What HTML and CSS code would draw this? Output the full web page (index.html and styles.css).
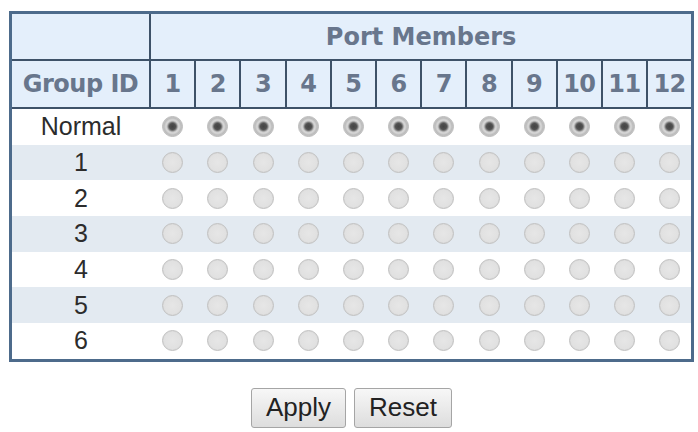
FILE: index.html
```html
<!DOCTYPE html>
<html>
    <head>
        <title>Port Isolation</title>
        <meta charset="UTF-8">
        <meta name="viewport" content="width=device-width, initial-scale=1.0">
        <link rel="stylesheet" href="styles.css">
    </head>
    <body>
        <form id="isolationForm" class="panel">
            <table class="members">
                <colgroup>
                    <col class="col-group">
                    <col span="12" class="col-port">
                </colgroup>
                <thead>
                    <tr class="title-row">
                        <th></th>
                        <th colspan="12">Port Members</th>
                    </tr>
                    <tr class="port-row" id="portRow">
                        <th>Group ID</th>
                    </tr>
                </thead>
                <tbody id="groupList"></tbody>
            </table>

            <div class="actions">
                <button type="button" class="button">Apply</button>
                <button type="reset" class="button">Reset</button>
            </div>
        </form>

        <script>
            const ports = 12;
            const groups = ['Normal', '1', '2', '3', '4', '5', '6'];

            const portRow = document.getElementById('portRow');
            for (let p = 1; p <= ports; p++) {
                const th = document.createElement('th');
                th.textContent = p;
                portRow.appendChild(th);
            }

            const groupList = document.getElementById('groupList');
            groups.forEach((group, i) => {
                const row = document.createElement('tr');
                const label = document.createElement('td');
                label.className = 'group-name';
                label.textContent = group;
                row.appendChild(label);

                for (let p = 1; p <= ports; p++) {
                    const cell = document.createElement('td');
                    const radio = document.createElement('input');
                    radio.type = 'radio';
                    radio.name = 'port' + p;
                    radio.value = i;
                    radio.className = 'radio';
                    if (i === 0) radio.defaultChecked = true;
                    cell.appendChild(radio);
                    row.appendChild(cell);
                }
                groupList.appendChild(row);
            });
        </script>
    </body>
</html>
```

FILE: styles.css
```css
body {
    margin: 0;
    padding: 0;
    background-color: #fff;
    font-family: "Liberation Sans", Arial, sans-serif;
}
.panel {
    padding: 11px 0 0 9px;
}
.members {
    width: 685px;
    table-layout: fixed;
    border-collapse: collapse;
    border: 3px solid #4d6b8b;
}
.col-group {
    width: 139px;
}
.col-port {
    width: 45px;
}
thead th {
    background-color: #e4effb;
    color: #68768c;
    font-family: "DejaVu Sans", Verdana, sans-serif;
    font-weight: bold;
    font-size: 24px;
    border: 2px solid #3e5268;
    padding: 0;
}
.port-row th {
    height: 46px;
    letter-spacing: -0.5px;
}
.title-row th {
    height: 45px;
}
tbody td {
    height: 35.7px;
    padding: 0;
    text-align: center;
    vertical-align: middle;
}
tbody tr:nth-child(even) td {
    background-color: #e3eaf1;
}
.group-name {
    font-size: 25px;
    color: #2c2c2c;
}
.radio {
    appearance: none;
    -webkit-appearance: none;
    display: block;
    width: 21px;
    height: 21px;
    margin: 0 auto;
    border-radius: 50%;
    border: 1px solid #c2c2c2;
    background: radial-gradient(circle, #e6e6e6 0, #e1e1e1 60%, #cfcfcf 85%, #c6c6c6 100%);
}
.radio:checked {
    border-color: #bdbdbd;
    background: radial-gradient(circle, #444 0, #505050 3px, #747474 4px, #c6c6c6 5.5px, #d8d8d8 6.5px, #bcbcbc 8.5px, #c6c6c6 10px);
}
.actions {
    display: flex;
    justify-content: center;
    gap: 8px;
    width: 685px;
    margin-top: 26px;
}
.button {
    height: 40px;
    padding: 0 14px;
    font-family: "Liberation Sans", Arial, sans-serif;
    font-size: 26px;
    color: #222;
    background: linear-gradient(#f7f7f7, #dddddd);
    border: 1px solid #a5a5a5;
    border-radius: 3px;
}
```
